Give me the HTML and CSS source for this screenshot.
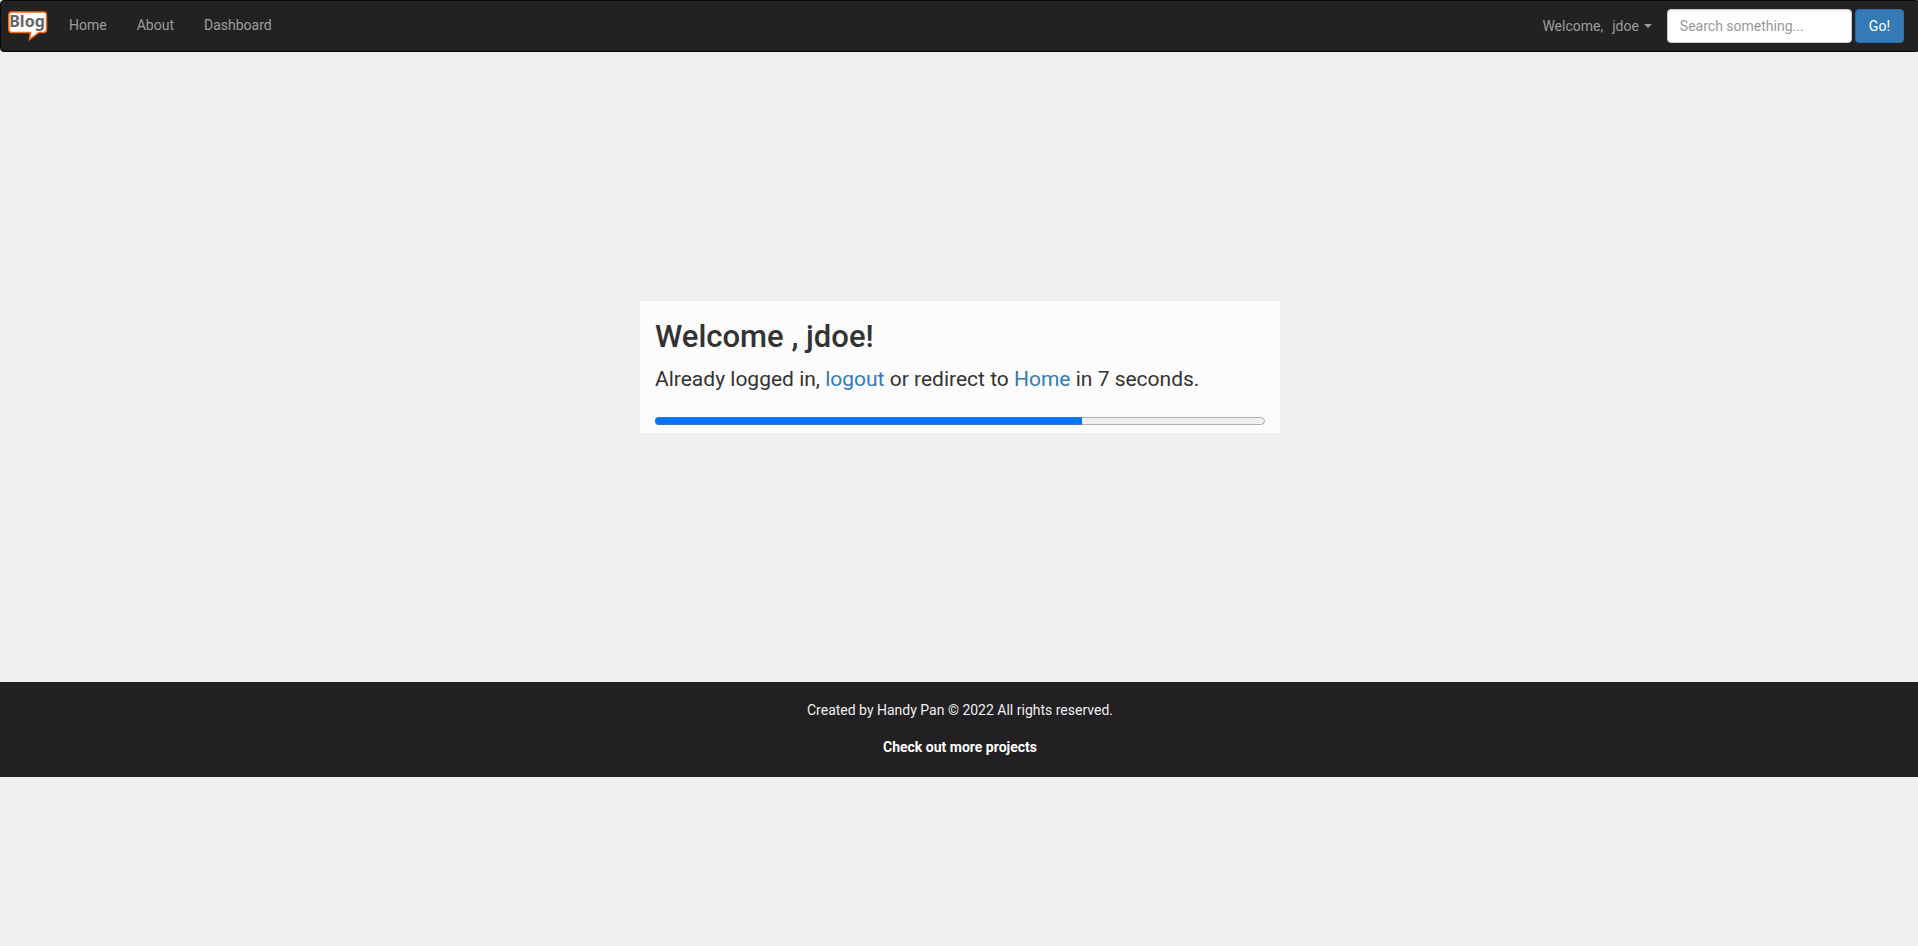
FILE: index.html
```html
<!DOCTYPE html>
<html lang="en">
<head>
<meta charset="utf-8">
<meta name="viewport" content="width=device-width, initial-scale=1">
<title>Blog</title>
<link rel="stylesheet" href="styles.css">
</head>
<body>
<nav class="navbar">
  <a class="brand" href="#" aria-label="Blog home">
    <svg class="logo" width="40" height="30" viewBox="0 0 40 30">
      <path d="M3.5 1H35.5Q38.5 1 38.5 4V18.5Q38.5 21.5 35.5 21.5H31L21.5 28.5L22.5 21.5H3.5Q.8 21.5 .8 18.5V4Q.8 1 3.5 1Z" fill="#fff" stroke="#f96a0c" stroke-width="1.5"/>
      <text class="logo-text" x="19" y="16" text-anchor="middle">Blog</text>
    </svg>
  </a>
  <ul class="links">
    <li><a href="#">Home</a></li>
    <li><a href="#">About</a></li>
    <li><a href="#">Dashboard</a></li>
  </ul>
  <div class="account">
    <span>Welcome,</span>
    <button class="user" type="button">jdoe<span class="caret"></span></button>
  </div>
  <form class="search">
    <input class="field" type="text" placeholder="Search something..." aria-label="Search">
    <button class="go" type="button">Go!</button>
  </form>
</nav>
<main class="main">
  <section class="card">
    <h2 class="title">Welcome , jdoe!</h2>
    <p class="lead">Already logged in, <a href="#">logout</a> or redirect to <a href="#">Home</a> in 7 seconds.</p>
    <progress class="progress" value="7" max="10" aria-label="Redirect countdown"></progress>
  </section>
</main>
<footer class="footer">
  <p>Created by Handy Pan © 2022 All rights reserved.</p>
  <a href="#">Check out more projects</a>
</footer>
</body>
</html>
```
FILE: styles.css
```css
* { box-sizing: border-box; }
html { overflow-x: hidden; background: #f0f0f0; }
body {
  margin: 0 -2px 0 0;
  color: #333;
  font: 14px/20px Roboto, sans-serif;
}
a { text-decoration: none; color: #337ab7; }
.navbar {
  display: flex;
  align-items: center;
  min-height: 52px;
  padding: 0 15px 0 7px;
  background: #222;
  border: 1px solid #080808;
  border-radius: 4px;
  color: #9d9d9d;
}
.brand { display: flex; }
.logo { display: block; }
.logo-text { font: bold 16px "Noto Sans", sans-serif; fill: #666; }
.links {
  display: flex;
  margin: 0 auto 0 6px;
  padding: 0;
  list-style: none;
}
.links a { display: block; padding: 14px 15px 16px; color: #9d9d9d; }
.account { display: flex; gap: 9px; margin-right: 15px; }
.user {
  display: flex;
  align-items: center;
  gap: 5px;
  padding: 0;
  border: 0;
  background: none;
  color: inherit;
  font: inherit;
}
.caret {
  border-top: 4px solid;
  border-left: 4px solid transparent;
  border-right: 4px solid transparent;
}
.search { display: flex; gap: 3px; }
.field {
  width: 185px;
  height: 34px;
  padding: 6px 12px;
  border: 1px solid #ccc;
  border-radius: 4px;
  background: #fff;
  box-shadow: inset 0 1px 1px rgba(0, 0, 0, .075);
  font: inherit;
}
.field::placeholder { color: #999; }
.go {
  padding: 6px 13px;
  border: 1px solid #2e6da4;
  border-radius: 4px;
  background: #337ab7;
  color: #fff;
  font: inherit;
}
.main {
  display: flex;
  align-items: center;
  justify-content: center;
  min-height: 630px;
}
.card {
  width: 33.3333%;
  padding: 19px 15px 4px;
  background: #fcfcfc;
}
.title { margin: 0 0 12px; font-size: 31px; line-height: 33px; font-weight: 500; }
.lead { margin: 0 0 19px; font-size: 21px; line-height: 29px; font-weight: 400; }
.progress { display: block; width: 100%; height: 16px; }
.footer {
  padding: 18px 15px 20px;
  background: #222023;
  color: #efefef;
  text-align: center;
}
.footer p { margin: 0 0 17px; }
.footer a { display: inline-block; color: #fff; font-weight: 700; }
```
